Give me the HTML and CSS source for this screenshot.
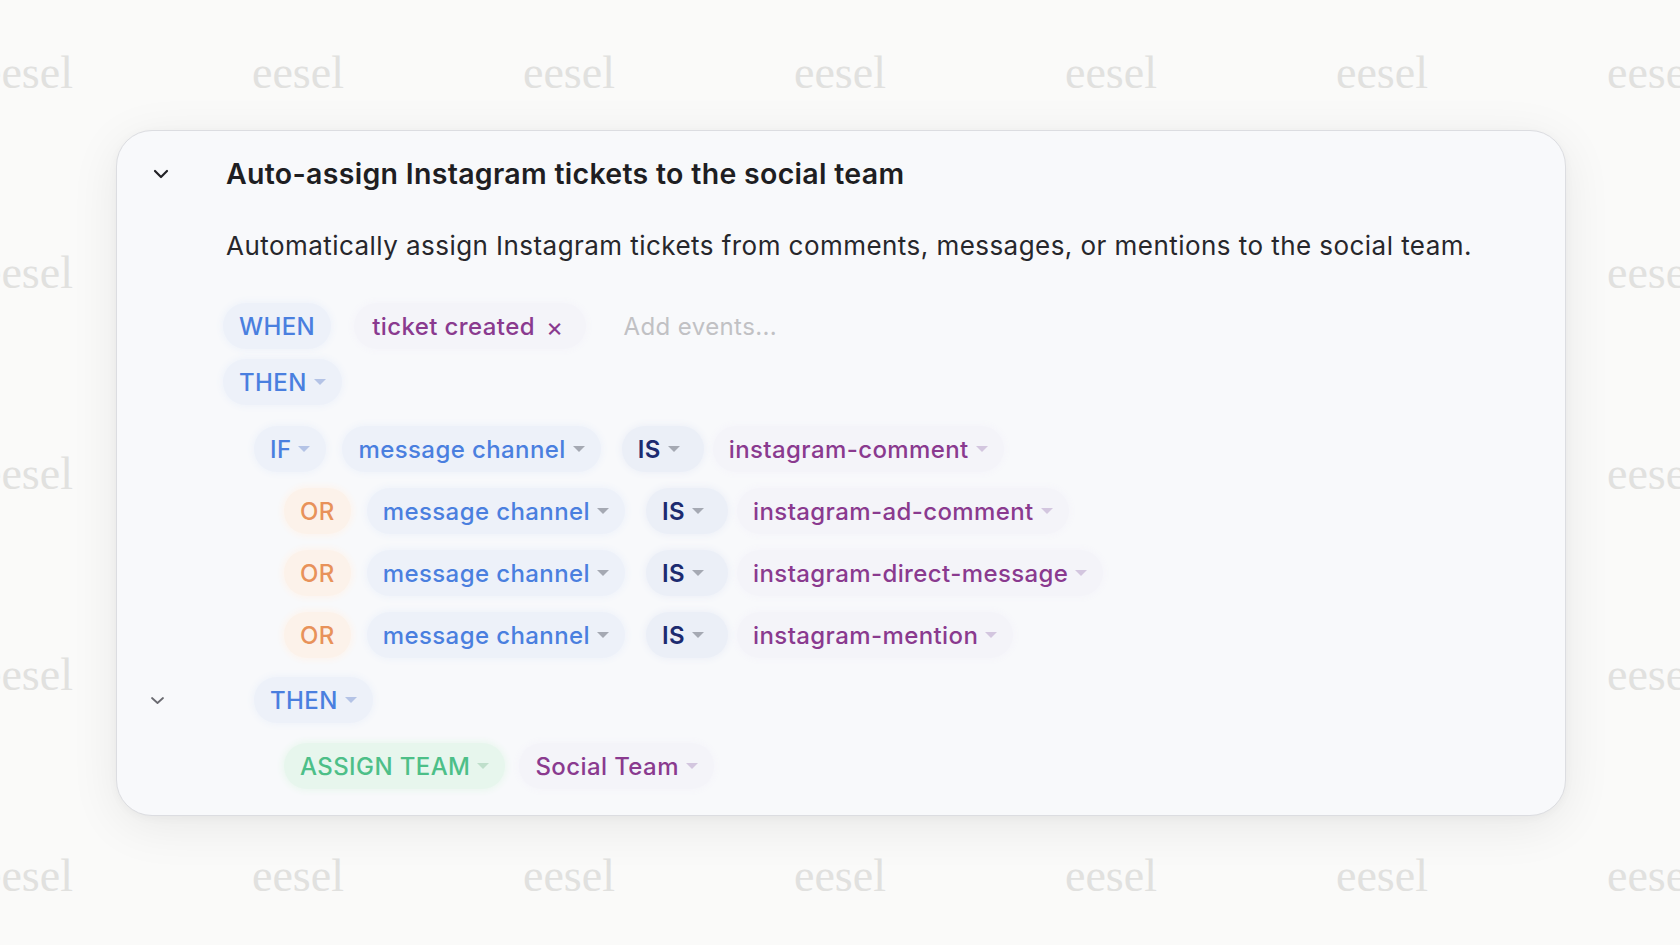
FILE: index.html
```html
<!DOCTYPE html>
<html lang="en">
<head>
<meta charset="utf-8">
<title>Auto-assign rule</title>
<link rel="stylesheet" href="styles.css">
</head>
<body>
<div class="watermarks" aria-hidden="true">
  <div class="wm-grid">
    <span>eesel</span><span>eesel</span><span>eesel</span><span>eesel</span><span>eesel</span><span>eesel</span><span>eesel</span>
    <span>eesel</span><span class="hid">eesel</span><span class="hid">eesel</span><span class="hid">eesel</span><span class="hid">eesel</span><span class="hid">eesel</span><span>eesel</span>
    <span>eesel</span><span class="hid">eesel</span><span class="hid">eesel</span><span class="hid">eesel</span><span class="hid">eesel</span><span class="hid">eesel</span><span>eesel</span>
    <span>eesel</span><span class="hid">eesel</span><span class="hid">eesel</span><span class="hid">eesel</span><span class="hid">eesel</span><span class="hid">eesel</span><span>eesel</span>
    <span>eesel</span><span>eesel</span><span>eesel</span><span>eesel</span><span>eesel</span><span>eesel</span><span>eesel</span>
  </div>
</div>

<main class="stage">
  <section class="card">
    <header class="head">
      <div class="gutter">
        <svg class="chev" width="16" height="10" viewBox="0 0 16 10"><path d="M2 2 L8 8 L14 2" fill="none" stroke="#222226" stroke-width="2.2" stroke-linecap="round" stroke-linejoin="round"/></svg>
      </div>
      <h1 class="title">Auto-assign Instagram tickets to the social team</h1>
    </header>
    <p class="desc">Automatically assign Instagram tickets from comments, messages, or mentions to the social team.</p>

    <div class="rules">
      <div class="row r-when">
        <div class="gutter"></div>
        <div class="pills">
          <span class="pill blue logic">WHEN</span>
          <span class="pill purple event">ticket created <span class="x">×</span></span>
          <span class="placeholder">Add events...</span>
        </div>
      </div>

      <div class="row r-then">
        <div class="gutter"></div>
        <div class="pills">
          <span class="pill blue logic">THEN<i class="caret c-blue"></i></span>
        </div>
      </div>

      <div class="row r-if">
        <div class="gutter"></div>
        <div class="pills lvl1">
          <span class="pill blue logic">IF<i class="caret c-blue"></i></span>
          <span class="pill blue field">message channel<i class="caret c-gray"></i></span>
          <span class="pill navy op">IS<i class="caret c-gray"></i></span>
          <span class="pill purple value">instagram-comment<i class="caret c-purple"></i></span>
        </div>
      </div>

      <div class="row r-or">
        <div class="gutter"></div>
        <div class="pills lvl2">
          <span class="pill orange logic">OR</span>
          <span class="pill blue field">message channel<i class="caret c-gray"></i></span>
          <span class="pill navy op">IS<i class="caret c-gray"></i></span>
          <span class="pill purple value">instagram-ad-comment<i class="caret c-purple"></i></span>
        </div>
      </div>

      <div class="row r-or">
        <div class="gutter"></div>
        <div class="pills lvl2">
          <span class="pill orange logic">OR</span>
          <span class="pill blue field">message channel<i class="caret c-gray"></i></span>
          <span class="pill navy op">IS<i class="caret c-gray"></i></span>
          <span class="pill purple value">instagram-direct-message<i class="caret c-purple"></i></span>
        </div>
      </div>

      <div class="row r-or">
        <div class="gutter"></div>
        <div class="pills lvl2">
          <span class="pill orange logic">OR</span>
          <span class="pill blue field">message channel<i class="caret c-gray"></i></span>
          <span class="pill navy op">IS<i class="caret c-gray"></i></span>
          <span class="pill purple value">instagram-mention<i class="caret c-purple"></i></span>
        </div>
      </div>

      <div class="row r-then2">
        <div class="gutter">
          <svg class="chev2" width="15" height="9" viewBox="0 0 15 9"><path d="M2 2 L7.5 7 L13 2" fill="none" stroke="#6a6a70" stroke-width="1.8" stroke-linecap="round" stroke-linejoin="round"/></svg>
        </div>
        <div class="pills lvl1">
          <span class="pill blue logic">THEN<i class="caret c-blue"></i></span>
        </div>
      </div>

      <div class="row r-assign">
        <div class="gutter"></div>
        <div class="pills lvl2">
          <span class="pill green action">ASSIGN TEAM<i class="caret c-green"></i></span>
          <span class="pill purple value">Social Team<i class="caret c-purple"></i></span>
        </div>
      </div>
    </div>
  </section>
</main>
</body>
</html>
```

FILE: styles.css
```css
* { box-sizing: border-box; }

html, body {
  margin: 0;
  padding: 0;
}

body {
  width: 1680px;
  height: 945px;
  overflow: hidden;
  position: relative;
  background: #fafaf9;
  font-family: "Inter", "Noto Sans", sans-serif;
  color: #222226;
}

/* background watermark layer */
.watermarks {
  position: absolute;
  left: 0;
  top: 0;
  width: 1680px;
  height: 945px;
  overflow: hidden;
  z-index: 0;
}

.wm-grid {
  margin-left: -19px;
  display: grid;
  grid-template-columns: repeat(7, 271px);
  grid-auto-rows: 200.75px;
}

.wm-grid span {
  font-family: "Liberation Serif", "Times New Roman", serif;
  font-size: 46px;
  line-height: 46px;
  padding-top: 49.5px;
  color: #e1e1df;
}

.wm-grid span.hid { visibility: hidden; }

.stage {
  position: relative;
  z-index: 1;
  padding: 130px 0 0 116px;
}

.card {
  width: 1450px;
  height: 686px;
  background: #f8f9fb;
  border: 1px solid #dcdde1;
  border-radius: 36px;
  box-shadow: 0 10px 50px rgba(0, 0, 0, 0.075), 0 2px 10px rgba(0, 0, 0, 0.035);
  padding-top: 26px;
}

.head {
  display: flex;
  align-items: center;
  height: 34px;
}

.head .gutter {
  width: 109px;
  flex-shrink: 0;
  display: flex;
  align-items: center;
}

.chev {
  margin-left: 36px;
  display: block;
}

.title {
  margin: 0;
  font-size: 28.5px;
  line-height: 34px;
  font-weight: 600;
  color: #1e1e22;
  letter-spacing: 0.3px;
}

.desc {
  margin: 38px 0 0 109px;
  font-size: 26px;
  line-height: 34px;
  font-weight: 400;
  color: #27272b;
  letter-spacing: 0.45px;
}

.rules {
  margin-top: 40px;
}

.row {
  display: flex;
  align-items: center;
  height: 46px;
}

.row .gutter {
  width: 106px;
  flex-shrink: 0;
  display: flex;
  align-items: center;
}

.r-then { margin-top: 10px; }
.r-if { margin-top: 21px; }
.r-or { margin-top: 16px; }
.r-then2 { margin-top: 19px; }
.r-assign { margin-top: 20px; }

.chev2 {
  margin-left: 33px;
  display: block;
}

.pills {
  display: flex;
  align-items: center;
}

.pills.lvl1 { margin-left: 31px; }
.pills.lvl2 { margin-left: 61px; }

.pill {
  display: inline-flex;
  align-items: center;
  height: 46px;
  padding: 0 16px;
  border-radius: 23px;
  font-size: 24px;
  font-weight: 500;
  letter-spacing: 0.4px;
  white-space: nowrap;
}

.pill.blue { color: #4a7fdf; background: #edf1f9; box-shadow: 0 0 6px 2px #eff3fa; }
.pill.navy { color: #1c2b70; background: #ebeff7; box-shadow: 0 0 6px 2px #eef1f8; font-weight: 600; }
.pill.purple { color: #8a3a8f; background: #f4f4f9; box-shadow: 0 0 6px 2px #f5f5fa; }
.pill.orange { color: #e8925a; background: #fcf2ea; box-shadow: 0 0 6px 2px #fdf4ed; }
.pill.green { color: #4dbf88; background: #e7f6ed; box-shadow: 0 0 6px 2px #eaf7ef; }

.pill.logic { margin-right: 16px; }
.pill.field { margin-right: 21px; }
.pill.op { margin-right: 9px; padding-right: 24px; }
.pill.event { margin-right: 38px; padding-left: 18px; padding-right: 22px; }
.pill.action { margin-right: 14px; }

.r-when .pill.logic { margin-right: 23px; }

.x {
  margin-left: 11px;
  font-weight: 400;
  font-size: 26px;
}

.placeholder {
  font-size: 24px;
  color: #c1c1c4;
  font-weight: 400;
  letter-spacing: 0.4px;
}

.caret {
  display: inline-block;
  width: 0;
  height: 0;
  margin-left: 7px;
  border-left: 6px solid transparent;
  border-right: 6px solid transparent;
  border-top: 6px solid #a7abb4;
}

.c-gray { border-top-color: #a5a9b3; }
.c-blue { border-top-color: #b4c3e6; }
.c-purple { border-top-color: #d3c6df; }
.c-green { border-top-color: #bfdfcb; }
```
